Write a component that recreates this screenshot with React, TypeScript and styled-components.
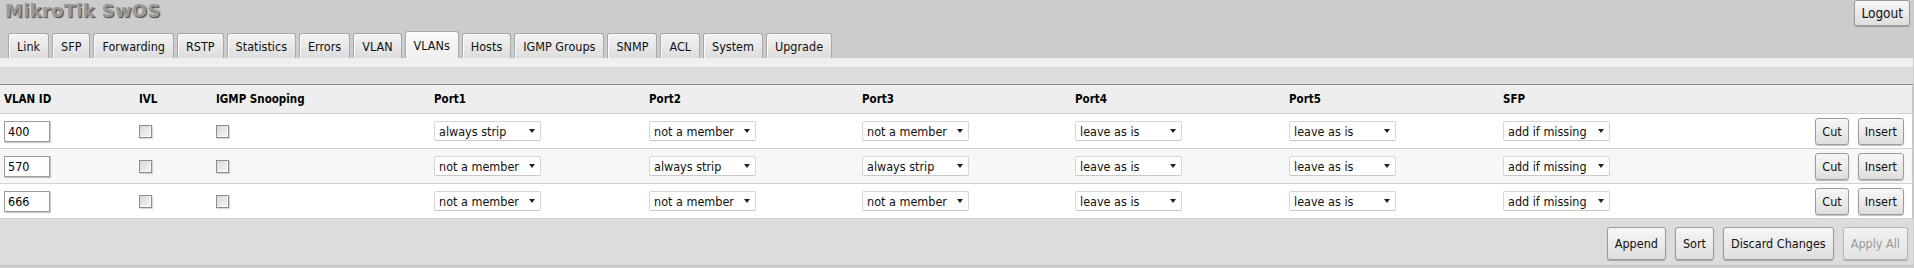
import React from "react";
import styled, { createGlobalStyle, css } from "styled-components";

const GlobalStyle = createGlobalStyle`
  html, body { margin: 0; padding: 0; background: #cccccc; }
  body {
    font-family: "DejaVu Sans Condensed", "DejaVu Sans", sans-serif;
    font-size: 12.5px;
    color: #000;
  }
  * { box-sizing: border-box; }
`;

const Page = styled.div`
  width: 100%;
  min-height: 268px;
  background: #cccccc;
`;

const TopRow = styled.div`
  display: flex;
  justify-content: space-between;
  align-items: flex-start;
  height: 31px;
  padding: 0 4px 0 5px;
`;

const Title = styled.div`
  font-family: "DejaVu Sans", sans-serif;
  font-weight: bold;
  font-size: 18px;
  line-height: 22px;
  color: #9a9a9a;
  letter-spacing: 0.3px;
  text-shadow: 1px 1px 1px #444;
`;

const Button = styled.button<{ $disabled?: boolean; $big?: boolean }>`
  font-family: inherit;
  font-size: ${(p) => (p.$big ? "13.5px" : "12.5px")};
  height: ${(p) => (p.$big ? "26px" : "27px")};
  padding: 0 6px;
  border: 1px solid #9a9a9a;
  border-radius: 3px;
  background: linear-gradient(#f7f7f7, #dedede);
  box-shadow: 0 1px 1px rgba(0, 0, 0, 0.25);
  color: #111;
  cursor: pointer;
  ${(p) =>
    p.$disabled &&
    css`
      color: #9a9a9a;
      border-color: #b8b8b8;
      background: linear-gradient(#f2f2f2, #e2e2e2);
    `}
`;

const TabBar = styled.div`
  display: flex;
  align-items: flex-end;
  gap: 3px;
  height: 27px;
  padding-left: 8px;
`;

const Tab = styled.div<{ $active?: boolean }>`
  height: ${(p) => (p.$active ? "27px" : "25px")};
  padding: 0 8px;
  display: flex;
  align-items: center;
  border: 1px solid #a8a8a8;
  border-bottom: none;
  border-radius: 3px 3px 0 0;
  background: ${(p) =>
    p.$active ? "linear-gradient(#f9f9f9, #efefef)" : "linear-gradient(#f3f3f3, #dddddd)"};
  box-shadow: inset 1px 1px 0 #fbfbfb;
  color: #111;
  padding-top: ${(p) => (p.$active ? "0" : "1px")};
`;

const Panel = styled.div`
  margin-right: 1px;
  background: #efefef;
  padding-top: 9px;
`;

const Toolbar = styled.div`
  height: 18px;
  background: #dcdcdc;
  border-bottom: 1px solid #8a8a8a;
`;

const cols = "135px 77px 218px 215px 213px 213px 214px 214px 214px 1fr";

const HeadRow = styled.div`
  display: grid;
  grid-template-columns: ${cols};
  height: 29px;
  align-items: center;
  background: #eeeeee;
  border-bottom: 1px solid #d2d2d2;
  border-right: 1px solid #c6c6c6;
  font-weight: bold;
  font-size: 11.5px;
`;

const Row = styled.div<{ $alt?: boolean }>`
  display: grid;
  grid-template-columns: ${cols};
  height: 35px;
  align-items: center;
  background: ${(p) => (p.$alt ? "#f7f7f7" : "#ffffff")};
  border-bottom: 1px solid #d2d2d2;
  border-right: 1px solid #c6c6c6;
`;

const Cell = styled.div`
  padding-left: 4px;
  display: flex;
  align-items: center;
`;

const ActionCell = styled.div`
  display: flex;
  justify-content: flex-end;
  align-items: center;
  gap: 9px;
  padding-right: 8px;
`;

const IdInput = styled.input`
  width: 46px;
  height: 21px;
  padding: 0 3px;
  font-family: inherit;
  font-size: 12.5px;
  border: 1px solid #9a9a9a;
  background: #fff;
  box-shadow: 1px 1px 1px rgba(0, 0, 0, 0.2);
  margin-top: 1px;
`;

const Check = styled.input`
  appearance: none;
  width: 13px;
  height: 13px;
  margin: 1px 0 0 0;
  border: 1px solid #8c8c8c;
  background: linear-gradient(135deg, #d8d8d8, #f6f6f6);
  box-shadow: inset -1px -1px 0 #fafafa, 1px 1px 1px rgba(0, 0, 0, 0.15);
`;

const SelectBox = styled.div`
  position: relative;
  width: 107px;
  height: 20px;
  &::after {
    content: "";
    position: absolute;
    right: 6px;
    top: 8px;
    border-left: 3.5px solid transparent;
    border-right: 3.5px solid transparent;
    border-top: 4px solid #222;
    pointer-events: none;
  }
`;

const Select = styled.select`
  appearance: none;
  width: 100%;
  height: 100%;
  padding: 0 0 0 4px;
  font-family: inherit;
  font-size: 12.5px;
  color: #111;
  background: #fff;
  border: 1px solid #d6d6d6;
  border-bottom-color: #c8c8c8;
  border-radius: 2px;
  outline: none;
`;

const Footer = styled.div`
  display: flex;
  justify-content: flex-end;
  gap: 9px;
  height: 47px;
  padding: 8px 5px 0 0;
  background: #dcdcdc;
  border-bottom: 1px solid #c4c4c4;
`;

const FooterButton = styled(Button)`
  height: 33px;
  padding: 0 7px;
`;

const tabs = [
  "Link", "SFP", "Forwarding", "RSTP", "Statistics", "Errors", "VLAN", "VLANs",
  "Hosts", "IGMP Groups", "SNMP", "ACL", "System", "Upgrade",
];

const options = ["leave as is", "always strip", "add if missing", "not a member"];

const rows = [
  { id: "400", ports: ["always strip", "not a member", "not a member", "leave as is", "leave as is", "add if missing"] },
  { id: "570", ports: ["not a member", "always strip", "always strip", "leave as is", "leave as is", "add if missing"] },
  { id: "666", ports: ["not a member", "not a member", "not a member", "leave as is", "leave as is", "add if missing"] },
];

const heads = ["VLAN ID", "IVL", "IGMP Snooping", "Port1", "Port2", "Port3", "Port4", "Port5", "SFP"];

export default function App() {
  return (
    <Page>
      <GlobalStyle />
      <TopRow>
        <Title>MikroTik SwOS</Title>
        <Button $big>Logout</Button>
      </TopRow>
      <TabBar>
        {tabs.map((t) => (
          <Tab key={t} $active={t === "VLANs"}>
            {t}
          </Tab>
        ))}
      </TabBar>
      <Panel>
        <Toolbar />
        <HeadRow>
          {heads.map((h) => (
            <Cell key={h}>{h}</Cell>
          ))}
          <div />
        </HeadRow>
        {rows.map((r, i) => (
          <Row key={r.id} $alt={i === 1}>
            <Cell>
              <IdInput defaultValue={r.id} />
            </Cell>
            <Cell>
              <Check type="checkbox" />
            </Cell>
            <Cell>
              <Check type="checkbox" />
            </Cell>
            {r.ports.map((p, j) => (
              <Cell key={j}>
                <SelectBox>
                  <Select defaultValue={p}>
                    {options.map((o) => (
                      <option key={o}>{o}</option>
                    ))}
                  </Select>
                </SelectBox>
              </Cell>
            ))}
            <ActionCell>
              <Button>Cut</Button>
              <Button>Insert</Button>
            </ActionCell>
          </Row>
        ))}
        <Footer>
          <FooterButton>Append</FooterButton>
          <FooterButton>Sort</FooterButton>
          <FooterButton>Discard Changes</FooterButton>
          <FooterButton $disabled>Apply All</FooterButton>
        </Footer>
      </Panel>
    </Page>
  );
}
